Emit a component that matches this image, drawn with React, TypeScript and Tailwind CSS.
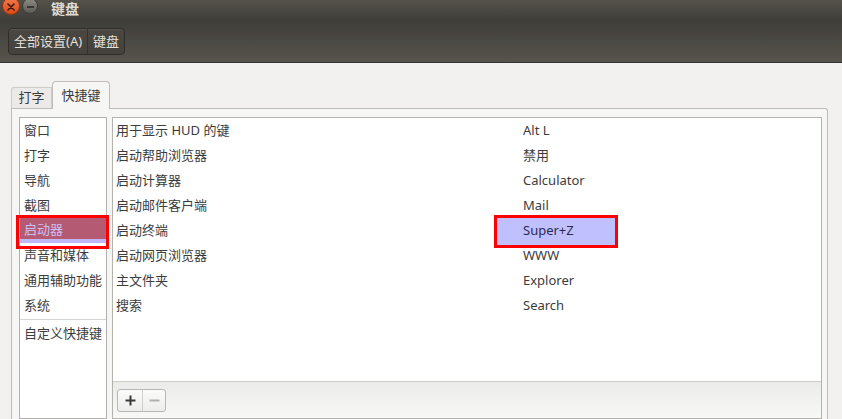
import React from 'react';

const categories = ['窗口', '打字', '导航', '截图', '启动器', '声音和媒体', '通用辅助功能', '系统'];

const shortcuts = [
  { name: '用于显示 HUD 的键', key: 'Alt L' },
  { name: '启动帮助浏览器', key: '禁用' },
  { name: '启动计算器', key: 'Calculator' },
  { name: '启动邮件客户端', key: 'Mail' },
  { name: '启动终端', key: 'Super+Z', selected: true },
  { name: '启动网页浏览器', key: 'WWW' },
  { name: '主文件夹', key: 'Explorer' },
  { name: '搜索', key: 'Search' },
];

const font = { fontFamily: '"Noto Sans", "Noto Sans CJK SC", sans-serif' };

function TitleBar() {
  return (
    <div className="h-[20px] flex items-start bg-gradient-to-b from-[#55524b] to-[#403e39]">
      <div className="ml-[2px] -mt-[3px] w-[18px] h-[18px] rounded-full bg-gradient-to-b from-[#f27a4c] to-[#dd4814] border border-[#9c3310] flex items-center justify-center">
        <svg width="8" height="8" viewBox="0 0 8 8" className="mt-[2px]">
          <path d="M1 1 L7 7 M7 1 L1 7" stroke="#3a1a0c" strokeWidth="1.6" strokeLinecap="round" />
        </svg>
      </div>
      <div className="ml-[2px] -mt-[2px] w-[16px] h-[16px] rounded-full bg-gradient-to-b from-[#8c8984] to-[#5f5c57] border border-[#3d3b37] flex items-center justify-center">
        <div className="w-[7px] h-[2px] bg-[#3a3835] mt-[2px]" />
      </div>
      <span className="ml-[13px] mt-[1px] text-[14px] font-bold text-[#dfdbd2] leading-[15px]">键盘</span>
    </div>
  );
}

function Toolbar() {
  return (
    <div className="h-[43px] bg-gradient-to-b from-[#3f3d38] to-[#57544d] border-b border-[#34322e] px-[8px] pt-[8px]">
      <div className="inline-flex h-[27px] rounded-[4px] border border-[#2f2d2a] bg-gradient-to-b from-[#4a4742] to-[#45423d] text-[13px] text-[#e4e1da] shadow-[inset_0_1px_0_rgba(255,255,255,0.08)]">
        <div className="px-[5px] flex items-center border-r border-[#35332f]">全部设置(A)</div>
        <div className="px-[5px] flex items-center">键盘</div>
      </div>
    </div>
  );
}

function Tabs() {
  return (
    <div className="flex items-end h-[28px]">
      <div className="h-[21px] w-[41px] border border-b-0 border-[#cfccc7] rounded-tl-[3px] bg-[#ebeae8] text-[13px] text-[#3c3c3c] flex items-center justify-center">
        打字
      </div>
      <div className="h-[28px] w-[58px] border border-b-0 border-[#c0bdb8] rounded-t-[4px] bg-[#f6f6f5] text-[13px] text-[#3c3c3c] flex items-center justify-center -mb-px relative z-10">
        快捷键
      </div>
    </div>
  );
}

function CategoryList() {
  return (
    <div className="w-[88px] shrink-0 bg-white border border-[#b2b0ab] text-[13px] text-[#3c3c3c]">
      {categories.map((c) =>
        c === '启动器' ? (
          <div key={c} className="relative h-[25px]">
            <div className="h-[25px] bg-[#b45b73] border-b-[4px] border-[#c0b8f6] flex items-center px-[4px] pt-[2px] text-[#cbbff2]">{c}</div>
            <div className="absolute -left-[4px] -right-[3px] -top-[3px] -bottom-[6px] border-[3px] border-[#ff0000]" />
          </div>
        ) : (
          <div key={c} className="h-[25px] flex items-center px-[4px]">{c}</div>
        )
      )}
      <div className="h-[1px] bg-[#d6d4d0] mt-[1px]" />
      <div className="h-[28px] flex items-center px-[4px]">自定义快捷键</div>
    </div>
  );
}

function ShortcutTree() {
  return (
    <div className="flex-1 flex flex-col border border-[#b5b3ae] bg-white">
      <div className="h-[263px] text-[13px] text-[#3c3c3c]">
        {shortcuts.map((s) => (
          <div key={s.name} className="h-[25px] flex items-center">
            <div className="w-[410px] pl-[3px]">{s.name}</div>
            {s.selected ? (
              <div className="relative h-[25px] flex items-center">
                <div className="absolute -left-[29px] -top-[3px] w-[124px] h-[33px] border-[3px] border-[#ff0000] bg-[#c0c0ff]" />
                <span className="relative text-[#2c2b4e]">{s.key}</span>
              </div>
            ) : (
              <div>{s.key}</div>
            )}
          </div>
        ))}
      </div>
      <div className="flex-1 border-t border-[#cfcdc9] bg-gradient-to-b from-[#ebebea] to-[#f8f8f7] px-[4px] pt-[6px]">
        <div className="inline-flex h-[23px] rounded-[3px] border border-[#b9b7b3] bg-gradient-to-b from-[#fbfbfb] to-[#ededec]">
          <div className="w-[25px] flex items-center justify-center border-r border-[#d2d0cc]">
            <svg width="11" height="11" viewBox="0 0 11 11">
              <path d="M5.5 0.5 V10.5 M0.5 5.5 H10.5" stroke="#3a3a3a" strokeWidth="2" />
            </svg>
          </div>
          <div className="w-[22px] flex items-center justify-center">
            <svg width="11" height="11" viewBox="0 0 11 11">
              <path d="M0.5 5.5 H10.5" stroke="#b3b1ad" strokeWidth="2" />
            </svg>
          </div>
        </div>
      </div>
    </div>
  );
}

export default function App() {
  return (
    <div className="w-[842px] h-[419px] overflow-hidden bg-[#f2f1f0] flex flex-col" style={font}>
      <TitleBar />
      <Toolbar />
      <div className="flex-1 flex flex-col pl-[11px] pt-[17px] w-[828px]">
        <Tabs />
        <div className="flex-1 flex gap-[5px] border border-b-0 border-[#c0bdb8] rounded-tr-[3px] bg-[#f6f6f5] pl-[7px] pr-[5px] pt-[8px]">
          <CategoryList />
          <ShortcutTree />
        </div>
      </div>
    </div>
  );
}
